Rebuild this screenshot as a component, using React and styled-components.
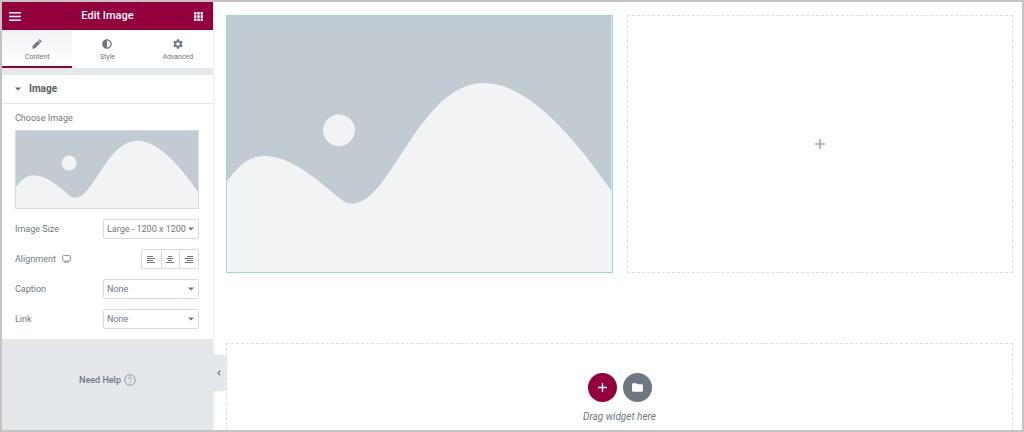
import React from "react";
import styled, { createGlobalStyle } from "styled-components";
import { FaAdjust } from "react-icons/fa";
import { MdFolder, MdSettings } from "react-icons/md";

const colors = {
  brand: "#93003c",
  text: "#6d7882",
  dark: "#556068",
  border: "#d5dadf",
  panel: "#e4e8eb",
  image: "#c2cad2",
  hill: "#f1f3f5",
  editing: "#8fdcf2",
};

const GlobalStyle = createGlobalStyle`
  * {
    box-sizing: border-box;
  }
  body {
    margin: 0;
    font-family: Roboto, "Liberation Sans", sans-serif;
    font-size: 9px;
    line-height: 12px;
    color: ${colors.text};
  }
  button,
  select {
    font: inherit;
    color: inherit;
    margin: 0;
    padding: 0;
    border: 0;
    background: none;
    cursor: pointer;
  }
  svg {
    display: block;
  }
`;

const Editor = styled.div`
  display: flex;
  height: 100vh;
  border: 2px solid #c3c3c3;
  overflow: hidden;
  background: #fff;
`;

const Panel = styled.aside`
  position: relative;
  flex: 0 0 211px;
  display: flex;
  flex-direction: column;
  background: ${colors.panel};
  box-shadow: 0 0 3px rgba(0, 0, 0, 0.15);
`;

const PanelHeader = styled.header`
  display: flex;
  align-items: center;
  justify-content: space-between;
  height: 28px;
  padding: 0 10px 0 7px;
  background: ${colors.brand};
  color: #fff;
  h1 {
    margin: 0;
    font-size: 11px;
    font-weight: 500;
  }
`;

const Tabs = styled.div`
  display: grid;
  grid-template-columns: repeat(3, 1fr);
  height: 38px;
  background: #fff;
`;

const Tab = styled.button`
  display: flex;
  flex-direction: column;
  align-items: center;
  padding-top: 8px;
  font-size: 7px;
  border-bottom: 2px solid
    ${(props) => (props.$active ? colors.brand : "transparent")};
  background: ${(props) =>
    props.$active ? "linear-gradient(#f1f2f4, #fff)" : "#fff"};
  svg {
    height: 12px;
    margin-bottom: 1px;
  }
`;

const Section = styled.section`
  margin-top: 7px;
  background: #fff;
`;

const SectionTitle = styled.button`
  display: flex;
  align-items: center;
  gap: 8px;
  width: 100%;
  height: 29px;
  padding: 0 13px;
  border-bottom: 1px solid ${colors.panel};
  color: ${colors.dark};
  font-size: 10px;
  font-weight: 700;
`;

const Controls = styled.div`
  display: flex;
  flex-direction: column;
  gap: 10px;
  padding: 8px 14px 10px 13px;
`;

const MediaControl = styled.div`
  display: flex;
  flex-direction: column;
  gap: 6px;
`;

const MediaButton = styled.button`
  height: 79px;
  border: 1px solid ${colors.border};
  svg {
    width: 100%;
    height: 100%;
  }
`;

const Row = styled.div`
  display: flex;
  align-items: center;
  justify-content: space-between;
  height: 20px;
`;

const RowLabel = styled.label`
  display: flex;
  align-items: center;
  gap: 6px;
`;

const SelectBox = styled.div`
  display: grid;
  align-items: center;
  width: 96px;
  height: 20px;
  border: 1px solid ${colors.border};
  border-radius: 2px;
  & > * {
    grid-area: 1 / 1;
  }
  select {
    appearance: none;
    width: 100%;
    height: 18px;
    padding-left: 3px;
    outline: none;
  }
  svg {
    justify-self: end;
    margin-right: 4px;
    pointer-events: none;
  }
`;

const Choices = styled.div`
  display: grid;
  grid-template-columns: repeat(3, 1fr);
  width: 58px;
  height: 20px;
  border: 1px solid ${colors.border};
  border-radius: 2px;
  button {
    display: grid;
    place-items: center;
  }
  button + button {
    border-left: 1px solid ${colors.border};
  }
`;

const NeedHelp = styled.a`
  display: flex;
  align-items: center;
  justify-content: center;
  gap: 3px;
  margin: 35px auto 0;
  color: inherit;
  font-weight: 500;
  text-decoration: none;
`;

// Sits outside the panel, over the edge of the preview.
const Collapse = styled.button`
  position: absolute;
  left: 100%;
  bottom: 39px;
  display: grid;
  place-items: center;
  width: 12px;
  height: 36px;
  border-radius: 0 3px 3px 0;
  background: ${colors.panel};
  box-shadow: 1px 0 2px rgba(0, 0, 0, 0.1);
`;

const Preview = styled.main`
  flex: 1;
  display: flex;
  flex-direction: column;
  gap: 70px;
  padding: 13px 9px 0 13px;
`;

const Columns = styled.div`
  display: grid;
  grid-template-columns: 1fr 1fr;
  gap: 14px;
`;

const ImageWidget = styled.div`
  border: 1px solid ${colors.editing};
  svg {
    width: 100%;
  }
`;

const EmptyColumn = styled.button`
  display: grid;
  place-items: center;
  border: 1px dashed #dcdfe1;
  color: #a4afb7;
`;

const DropArea = styled.div`
  flex: 1;
  display: flex;
  flex-direction: column;
  align-items: center;
  gap: 9px;
  padding-top: 29px;
  border: 1px dashed #dcdfe1;
  border-bottom: 0;
  p {
    margin: 0;
    font-size: 10px;
    font-style: italic;
  }
`;

const DropActions = styled.div`
  display: flex;
  gap: 6px;
`;

const RoundButton = styled.button`
  display: grid;
  place-items: center;
  width: 29px;
  height: 29px;
  border-radius: 50%;
  color: #fff;
  background: ${(props) => (props.$primary ? colors.brand : colors.text)};
`;

const Placeholder = () => (
  <svg viewBox="0 0 1160 772" preserveAspectRatio="xMidYMid slice">
    <path fill={colors.image} d="M0 0h1160v772H0z" />
    <path
      fill={colors.hill}
      d="M0 498C25 467 55 422 114 422C190 422 270 490 340 550C350 559 362 566 377 566C495 566 580 202 775 202C910 202 1050 370 1160 528V772H0Z"
    />
    <circle cx="338" cy="345" r="48" fill={colors.hill} />
  </svg>
);

const MenuIcon = () => (
  <svg width="12" height="9" viewBox="0 0 12 9" fill="currentColor">
    <path d="M0 0h12v1.5H0zM0 3.7h12v1.5H0zM0 7.4h12v1.5H0z" />
  </svg>
);

const GridIcon = () => (
  <svg width="9" height="9" viewBox="0 0 9 9" fill="currentColor">
    <path d="M0 0h2.4v2.4H0zM3.3 0h2.4v2.4H3.3zM6.6 0H9v2.4H6.6zM0 3.3h2.4v2.4H0zM3.3 3.3h2.4v2.4H3.3zM6.6 3.3H9v2.4H6.6zM0 6.6h2.4V9H0zM3.3 6.6h2.4V9H3.3zM6.6 6.6H9V9H6.6z" />
  </svg>
);

const PencilIcon = () => (
  <svg width="10" height="10" viewBox="0 0 10 10" fill="currentColor">
    <path d="M7 0.6Q7.5 0.1 8.1 0.6L9.4 1.9Q9.9 2.5 9.4 3L8.8 3.6L6.4 1.2ZM5.9 1.7L8.3 4.1L3.2 9.2L0.2 9.8L0.8 6.8Z" />
  </svg>
);

const Caret = () => (
  <svg width="6" height="4" viewBox="0 0 6 4" fill="currentColor">
    <path d="M0 0.4h6L3 3.6z" />
  </svg>
);

const PlusIcon = ({ size }) => (
  <svg width={size} height={size} viewBox="0 0 10 10" fill="currentColor">
    <path d="M4.2 0h1.6v4.2H10v1.6H5.8V10H4.2V5.8H0V4.2h4.2z" />
  </svg>
);

const DesktopIcon = () => (
  <svg
    width="9"
    height="8"
    viewBox="0 0 9 8"
    fill="none"
    stroke="currentColor"
    strokeWidth="0.8"
  >
    <rect x="0.7" y="0.6" width="7.6" height="5.6" rx="0.7" />
    <path d="M2.4 7.2h4.2" />
  </svg>
);

const HelpIcon = () => (
  <svg
    width="12"
    height="12"
    viewBox="0 0 12 12"
    fill="none"
    stroke="#8f9aa3"
    strokeWidth="1"
  >
    <circle cx="6" cy="6" r="5.3" />
    <path d="M4.4 4.8C4.4 2.7 7.6 2.8 7.6 4.7C7.6 5.9 6 5.8 6 7.2M6 8.2v1" />
  </svg>
);

const ChevronIcon = () => (
  <svg
    width="4"
    height="6"
    viewBox="0 0 4 6"
    fill="none"
    stroke="currentColor"
    strokeWidth="1.1"
  >
    <path d="M3.3 0.6L0.9 3l2.4 2.4" />
  </svg>
);

const alignPaths = {
  Left: "M0 0.5h6M0 2.5h8M0 4.5h6M0 6.5h8",
  Center: "M2 0.5h4M1 2.5h6M2 4.5h4M0 6.5h8",
  Right: "M2 0.5h6M0 2.5h8M2 4.5h6M0 6.5h8",
};

const AlignIcon = ({ side }) => (
  <svg width="8" height="7" viewBox="0 0 8 7" stroke="currentColor">
    <path d={alignPaths[side]} />
  </svg>
);

const SelectRow = ({ id, label, options }) => (
  <Row>
    <RowLabel htmlFor={id}>{label}</RowLabel>
    <SelectBox>
      <select id={id}>
        {options.map((option) => (
          <option key={option}>{option}</option>
        ))}
      </select>
      <Caret />
    </SelectBox>
  </Row>
);

class App extends React.Component {
  state = {
    tab: "Content",
  };
  renderTab(name, icon) {
    const active = this.state.tab === name;
    return (
      <Tab
        role="tab"
        aria-selected={active}
        $active={active}
        onClick={() => this.setState({ tab: name })}
      >
        {icon}
        {name}
      </Tab>
    );
  }
  render() {
    return (
      <Editor>
        <GlobalStyle />
        <Panel>
          <PanelHeader>
            <button aria-label="Menu">
              <MenuIcon />
            </button>
            <h1>Edit Image</h1>
            <button aria-label="Widgets">
              <GridIcon />
            </button>
          </PanelHeader>
          <Tabs role="tablist">
            {this.renderTab("Content", <PencilIcon />)}
            {this.renderTab("Style", <FaAdjust size={10} />)}
            {this.renderTab("Advanced", <MdSettings size={12} />)}
          </Tabs>
          <Section>
            <SectionTitle aria-expanded="true">
              <Caret />
              Image
            </SectionTitle>
            <Controls>
              <MediaControl>
                <label htmlFor="media">Choose Image</label>
                <MediaButton id="media">
                  <Placeholder />
                </MediaButton>
              </MediaControl>
              <SelectRow
                id="size"
                label="Image Size"
                options={["Large - 1200 x 1200"]}
              />
              <Row>
                <RowLabel as="span">
                  Alignment
                  <DesktopIcon />
                </RowLabel>
                <Choices role="group" aria-label="Alignment">
                  {["Left", "Center", "Right"].map((side) => (
                    <button key={side} aria-label={side}>
                      <AlignIcon side={side} />
                    </button>
                  ))}
                </Choices>
              </Row>
              <SelectRow id="caption" label="Caption" options={["None"]} />
              <SelectRow id="link" label="Link" options={["None"]} />
            </Controls>
          </Section>
          <NeedHelp href="#help">
            Need Help
            <HelpIcon />
          </NeedHelp>
          <Collapse aria-label="Collapse panel">
            <ChevronIcon />
          </Collapse>
        </Panel>
        <Preview>
          <Columns>
            <ImageWidget>
              <Placeholder />
            </ImageWidget>
            <EmptyColumn aria-label="Add widget">
              <PlusIcon size={10} />
            </EmptyColumn>
          </Columns>
          <DropArea>
            <DropActions>
              <RoundButton $primary aria-label="Add section">
                <PlusIcon size={9} />
              </RoundButton>
              <RoundButton aria-label="Add template">
                <MdFolder size={13} />
              </RoundButton>
            </DropActions>
            <p>Drag widget here</p>
          </DropArea>
        </Preview>
      </Editor>
    );
  }
}

export default App;
